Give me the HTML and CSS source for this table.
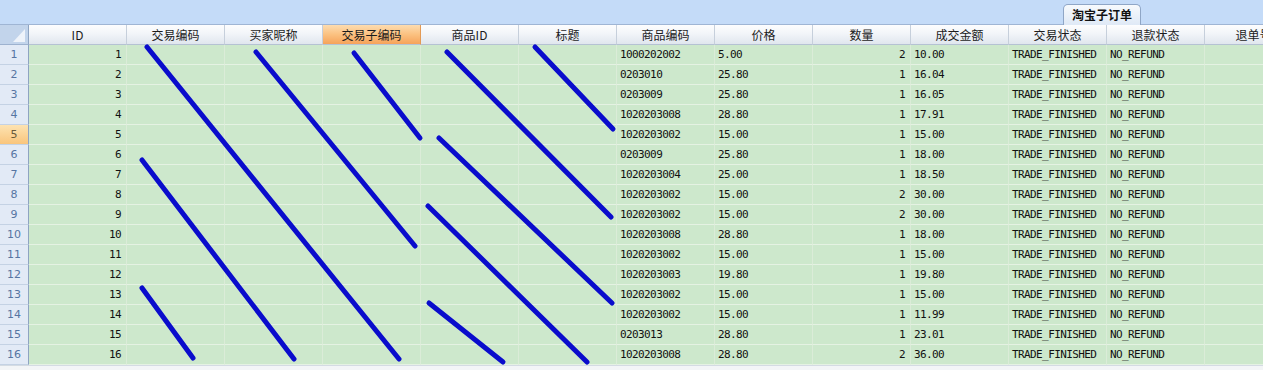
FILE: index.html
```html
<!DOCTYPE html>
<html lang="zh-CN">
<head>
<meta charset="utf-8">
<title>淘宝子订单</title>
<link rel="stylesheet" href="styles.css">
</head>
<body>
<div class="band"><div class="tab">淘宝子订单</div></div>
<div class="grid">
  <div class="corner"><svg width="28" height="19" viewBox="0 0 28 19"><polygon points="13,17 25,17 25,4" fill="#eef3fa"/></svg></div>
  <div class="hd">ID</div><div class="hd">交易编码</div><div class="hd">买家昵称</div><div class="hd sel">交易子编码</div><div class="hd">商品ID</div><div class="hd">标题</div><div class="hd">商品编码</div><div class="hd">价格</div><div class="hd">数量</div><div class="hd">成交金额</div><div class="hd">交易状态</div><div class="hd">退款状态</div><div class="hd">退单号</div>

  <div class="rh">1</div><div class="c r">1</div><div class="c"></div><div class="c"></div><div class="c"></div><div class="c"></div><div class="c"></div><div class="c">1000202002</div><div class="c">5.00</div><div class="c r">2</div><div class="c">10.00</div><div class="c">TRADE_FINISHED</div><div class="c">NO_REFUND</div><div class="c"></div>
  <div class="rh">2</div><div class="c r">2</div><div class="c"></div><div class="c"></div><div class="c"></div><div class="c"></div><div class="c"></div><div class="c">0203010</div><div class="c">25.80</div><div class="c r">1</div><div class="c">16.04</div><div class="c">TRADE_FINISHED</div><div class="c">NO_REFUND</div><div class="c"></div>
  <div class="rh">3</div><div class="c r">3</div><div class="c"></div><div class="c"></div><div class="c"></div><div class="c"></div><div class="c"></div><div class="c">0203009</div><div class="c">25.80</div><div class="c r">1</div><div class="c">16.05</div><div class="c">TRADE_FINISHED</div><div class="c">NO_REFUND</div><div class="c"></div>
  <div class="rh">4</div><div class="c r">4</div><div class="c"></div><div class="c"></div><div class="c"></div><div class="c"></div><div class="c"></div><div class="c">1020203008</div><div class="c">28.80</div><div class="c r">1</div><div class="c">17.91</div><div class="c">TRADE_FINISHED</div><div class="c">NO_REFUND</div><div class="c"></div>
  <div class="rh sel">5</div><div class="c r">5</div><div class="c"></div><div class="c"></div><div class="c"></div><div class="c"></div><div class="c"></div><div class="c">1020203002</div><div class="c">15.00</div><div class="c r">1</div><div class="c">15.00</div><div class="c">TRADE_FINISHED</div><div class="c">NO_REFUND</div><div class="c"></div>
  <div class="rh">6</div><div class="c r">6</div><div class="c"></div><div class="c"></div><div class="c"></div><div class="c"></div><div class="c"></div><div class="c">0203009</div><div class="c">25.80</div><div class="c r">1</div><div class="c">18.00</div><div class="c">TRADE_FINISHED</div><div class="c">NO_REFUND</div><div class="c"></div>
  <div class="rh">7</div><div class="c r">7</div><div class="c"></div><div class="c"></div><div class="c"></div><div class="c"></div><div class="c"></div><div class="c">1020203004</div><div class="c">25.00</div><div class="c r">1</div><div class="c">18.50</div><div class="c">TRADE_FINISHED</div><div class="c">NO_REFUND</div><div class="c"></div>
  <div class="rh">8</div><div class="c r">8</div><div class="c"></div><div class="c"></div><div class="c"></div><div class="c"></div><div class="c"></div><div class="c">1020203002</div><div class="c">15.00</div><div class="c r">2</div><div class="c">30.00</div><div class="c">TRADE_FINISHED</div><div class="c">NO_REFUND</div><div class="c"></div>
  <div class="rh">9</div><div class="c r">9</div><div class="c"></div><div class="c"></div><div class="c"></div><div class="c"></div><div class="c"></div><div class="c">1020203002</div><div class="c">15.00</div><div class="c r">2</div><div class="c">30.00</div><div class="c">TRADE_FINISHED</div><div class="c">NO_REFUND</div><div class="c"></div>
  <div class="rh">10</div><div class="c r">10</div><div class="c"></div><div class="c"></div><div class="c"></div><div class="c"></div><div class="c"></div><div class="c">1020203008</div><div class="c">28.80</div><div class="c r">1</div><div class="c">18.00</div><div class="c">TRADE_FINISHED</div><div class="c">NO_REFUND</div><div class="c"></div>
  <div class="rh">11</div><div class="c r">11</div><div class="c"></div><div class="c"></div><div class="c"></div><div class="c"></div><div class="c"></div><div class="c">1020203002</div><div class="c">15.00</div><div class="c r">1</div><div class="c">15.00</div><div class="c">TRADE_FINISHED</div><div class="c">NO_REFUND</div><div class="c"></div>
  <div class="rh">12</div><div class="c r">12</div><div class="c"></div><div class="c"></div><div class="c"></div><div class="c"></div><div class="c"></div><div class="c">1020203003</div><div class="c">19.80</div><div class="c r">1</div><div class="c">19.80</div><div class="c">TRADE_FINISHED</div><div class="c">NO_REFUND</div><div class="c"></div>
  <div class="rh">13</div><div class="c r">13</div><div class="c"></div><div class="c"></div><div class="c"></div><div class="c"></div><div class="c"></div><div class="c">1020203002</div><div class="c">15.00</div><div class="c r">1</div><div class="c">15.00</div><div class="c">TRADE_FINISHED</div><div class="c">NO_REFUND</div><div class="c"></div>
  <div class="rh">14</div><div class="c r">14</div><div class="c"></div><div class="c"></div><div class="c"></div><div class="c"></div><div class="c"></div><div class="c">1020203002</div><div class="c">15.00</div><div class="c r">1</div><div class="c">11.99</div><div class="c">TRADE_FINISHED</div><div class="c">NO_REFUND</div><div class="c"></div>
  <div class="rh">15</div><div class="c r">15</div><div class="c"></div><div class="c"></div><div class="c"></div><div class="c"></div><div class="c"></div><div class="c">0203013</div><div class="c">28.80</div><div class="c r">1</div><div class="c">23.01</div><div class="c">TRADE_FINISHED</div><div class="c">NO_REFUND</div><div class="c"></div>
  <div class="rh">16</div><div class="c r">16</div><div class="c"></div><div class="c"></div><div class="c"></div><div class="c"></div><div class="c"></div><div class="c">1020203008</div><div class="c">28.80</div><div class="c r">2</div><div class="c">36.00</div><div class="c">TRADE_FINISHED</div><div class="c">NO_REFUND</div><div class="c"></div>
</div>
<div class="foot"></div>
<svg class="marks" width="1263" height="370" viewBox="0 0 1263 370">
  <g stroke="#0a0ccc" stroke-width="5" stroke-linecap="round" fill="none">
    <path d="M147 47 L399 359"/>
    <path d="M256 52 L415 246"/>
    <path d="M354 53 L420 138"/>
    <path d="M142 160 L294 359"/>
    <path d="M142 288 L193 358"/>
    <path d="M447 52 L611 217"/>
    <path d="M535 47 L613 129"/>
    <path d="M439 138 L612 303"/>
    <path d="M428 206 L587 362"/>
    <path d="M429 303 L503 362"/>
  </g>
</svg>
</body>
</html>
```
FILE: styles.css
```css
html, body {
  margin: 0;
  padding: 0;
}
body {
  width: 1263px;
  height: 370px;
  overflow: hidden;
  position: relative;
  background: #eef1f5;
  font-family: "Noto Sans CJK SC", "DejaVu Sans", sans-serif;
}
.band {
  height: 25px;
  box-sizing: border-box;
  background: #c4dbf8;
  border-bottom: 1px solid #9fb5d4;
  display: flex;
  justify-content: flex-end;
  align-items: flex-end;
  padding-right: 122px;
}
.tab {
  width: 78px;
  height: 21px;
  box-sizing: border-box;
  margin-bottom: -1px;
  border: 1px solid #8fa6c6;
  border-bottom: none;
  border-radius: 5px 5px 0 0;
  background: linear-gradient(#f7fafd, #dfe9f6);
  font-family: "Noto Sans CJK SC", sans-serif;
  font-size: 12px;
  font-weight: 700;
  line-height: 19px;
  text-align: center;
  color: #111;
}
.grid {
  display: grid;
  grid-template-columns: 29px repeat(13, 98px);
  grid-auto-rows: 20px;
  width: 1303px;
}
.corner {
  background: #c2d4eb;
  border-right: 1px solid #8ea4c2;
  border-bottom: 1px solid #9db2cf;
  box-sizing: border-box;
  display: flex;
}
.hd {
  box-sizing: border-box;
  background: linear-gradient(#fdfdfe 0%, #f2f5f9 45%, #e0e6ee 100%);
  border-right: 1px solid #c6cfdb;
  border-bottom: 1px solid #b5c2d3;
  font-size: 12px;
  line-height: 19px;
  text-align: center;
  color: #1c1c1c;
  white-space: nowrap;
  overflow: hidden;
}
.hd.sel {
  background: linear-gradient(#fddcb0 0%, #fbc180 50%, #f6a35a 100%);
  border-right-color: #e39a55;
}
.rh {
  box-sizing: border-box;
  background: #e2eaf6;
  border-right: 1px solid #8ea4c2;
  border-bottom: 1px solid #c4d2e4;
  color: #5675a2;
  font-family: "DejaVu Sans", sans-serif;
  font-size: 11px;
  line-height: 19px;
  text-align: center;
}
.rh.sel {
  background: linear-gradient(#fde3b2, #f9c57c);
  color: #6a5a3a;
}
.c {
  box-sizing: border-box;
  background: #cde8cc;
  border-right: 1px solid #dbecd8;
  border-bottom: 1px solid #e5f2e3;
  font-family: "DejaVu Sans Mono", monospace;
  font-size: 11px;
  letter-spacing: -0.6px;
  line-height: 19px;
  color: #111;
  padding: 0 3px;
  white-space: nowrap;
  overflow: hidden;
}
.c.r {
  text-align: right;
  padding-right: 5px;
}
.foot {
  height: 5px;
  background: #f3f5f7;
  border-top: 1px solid #d4dbe3;
}
.marks {
  position: absolute;
  top: 0;
  left: 0;
  pointer-events: none;
}
```
